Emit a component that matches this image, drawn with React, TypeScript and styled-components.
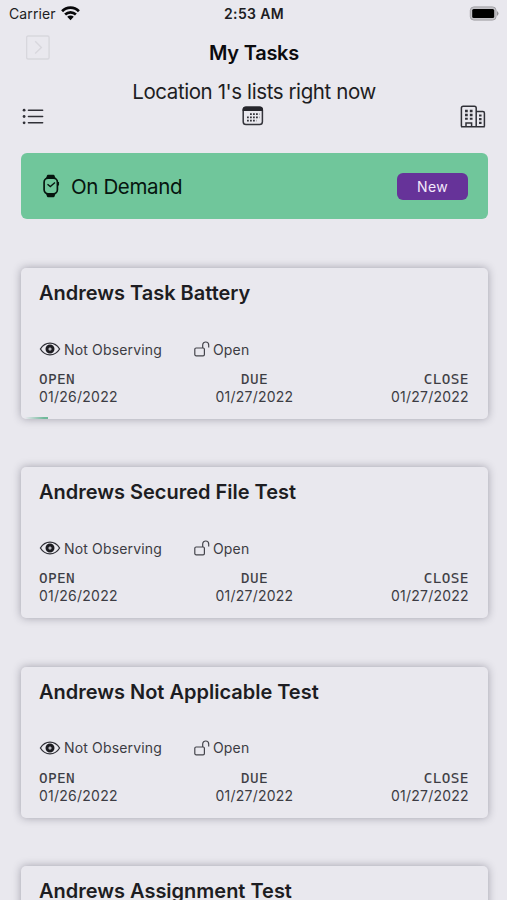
import React from "react";
import styled, { createGlobalStyle } from "styled-components";

const GlobalStyle = createGlobalStyle`
  * { box-sizing: border-box; }
  body { margin: 0; background: #e9e8ee; overflow: hidden; }
`;

const Screen = styled.main`
  width: 507px;
  height: 900px;
  overflow: hidden;
  background: #e9e8ee;
  color: #1d1d22;
  font-family: Inter, "Liberation Sans", sans-serif;
`;

const StatusBar = styled.div`
  height: 28px;
  padding: 0 8px 0 9px;
  display: grid;
  grid-template-columns: 1fr auto 1fr;
  align-items: center;
`;

const Carrier = styled.div`
  display: flex;
  align-items: center;
  gap: 5.5px;
  font-size: 14px;
  letter-spacing: 0.1px;
  line-height: 28px;

  svg { margin-top: -2px; }
`;

const Time = styled.div`
  margin-top: -1px;
  font-size: 14px;
  font-weight: 600;
  letter-spacing: 0.35px;
`;

const Battery = styled.svg`
  justify-self: end;
  margin-top: -2px;
`;

const NavBar = styled.header`
  height: 50px;
  padding: 7px 26px 0;
  display: grid;
  grid-template-columns: 24px 1fr 24px;
`;

const Title = styled.h1`
  margin: 6px 0 0;
  padding-left: 1px;
  text-align: center;
  font-size: 20px;
  line-height: 24px;
  font-weight: 600;
  letter-spacing: -0.25px;
  color: #0b0b0e;
`;

const Subtitle = styled.h2`
  margin: 0;
  height: 26px;
  padding-left: 1px;
  text-align: center;
  font-size: 20.5px;
  line-height: 27px;
  font-weight: 400;
  letter-spacing: -0.41px;
`;

const Toolbar = styled.nav`
  height: 24px;
  padding: 0 21px 0 22px;
  display: grid;
  grid-template-columns: 1fr 25px 1fr;
  align-items: center;

  svg:last-child { justify-self: end; }
`;

const Banner = styled.section`
  height: 66px;
  margin: 25px 19.5px 0 20.5px;
  padding: 0 19.5px 0 20px;
  display: flex;
  align-items: center;
  border-radius: 6px;
  background: #70c69b;
  color: #06150f;
`;

const BannerLabel = styled.span`
  flex: 1;
  margin-left: 10.5px;
  margin-top: 1px;
  font-size: 20.5px;
  letter-spacing: -0.37px;
`;

const NewButton = styled.button`
  width: 71px;
  height: 27px;
  padding: 0;
  border: 0;
  border-radius: 6px;
  background: #663399;
  color: #f3e8fb;
  font: 400 14px/27px Inter, sans-serif;
  letter-spacing: 0.4px;
`;

const CardList = styled.div`
  padding: 49px 19.5px 0 20.5px;
  display: grid;
  gap: 48.4px;
`;

const Card = styled.article`
  height: 151px;
  padding: 12px 18.6px 0 18.5px;
  display: flex;
  flex-direction: column;
  border-radius: 5px;
  overflow: hidden;
  background: #e9e8ee;
  box-shadow: 0 0 9px rgba(45, 42, 62, 0.38);
`;

const CardTitle = styled.h3`
  margin: 0;
  height: 57px;
  font-size: 20px;
  line-height: 27px;
  font-weight: 600;
  letter-spacing: -0.01px;
`;

const StatusRow = styled.div`
  height: 24px;
  display: flex;
  align-items: center;
  font-size: 14px;
  color: #3c3c43;
`;

const Status = styled.span<{ $width: number }>`
  width: ${({ $width }) => $width}px;
  display: flex;
  align-items: center;
  gap: 3px;
  letter-spacing: 0.16px;
  white-space: nowrap;
`;

const Dates = styled.div`
  margin-top: 10px;
  display: grid;
  grid-template-columns: 1fr 1fr 1fr;
  color: #3c3c43;
`;

const DateCell = styled.div<{ $align: string }>`
  text-align: ${({ $align }) => $align};
  font-size: 14px;
  line-height: 17px;
  letter-spacing: 0.24px;
  padding-left: ${({ $align }) => ($align === "center" ? "1px" : "0")};
`;

const DateLabel = styled.div`
  font-family: "DejaVu Sans Mono", monospace;
  font-size: 14.3px;
  line-height: 17px;
  letter-spacing: 0.4px;
  -webkit-text-stroke: 0.12px #3c3c43;
`;

const Progress = styled.div<{ $width: number }>`
  width: ${({ $width }) => $width}px;
  height: 2px;
  margin: auto 0 0 -18.5px;
  background: linear-gradient(90deg, rgba(112, 198, 155, 0) 15%, #70b99b 85%);
`;

const WifiIcon = () => (
  <svg width="19" height="15" viewBox="0 0 19 15" fill="none" stroke="#08080a" strokeWidth="2.7">
    <path d="M1.1 5.3C5.8.5 13.2.5 17.9 5.3" />
    <path d="M4.1 8.5c3.1-2.9 7.7-2.9 10.8 0" />
    <path d="m6.2 10.8 3.3 3.4 3.3-3.4c-1.8-1.6-4.8-1.6-6.6 0Z" fill="#08080a" stroke="none" />
  </svg>
);

const BatteryIcon = () => (
  <Battery width="30" height="15" viewBox="0 0 30 15">
    <rect x="1.3" y=".9" width="25.8" height="13.2" rx="3.6" fill="#c3c2c7" stroke="#a3a2a7" />
    <rect x="3.2" y="3" width="22" height="9" rx="1.5" fill="#000" />
    <path d="M28 5q3 2.5 0 5Z" fill="#929195" />
  </Battery>
);

const ForwardIcon = () => (
  <svg width="24" height="25" viewBox="0 0 24 25" fill="none" stroke="#d8d7dd" strokeWidth="1.4">
    <rect x=".6" y="1" width="22.5" height="23" rx="1.5" />
    <path d="m9.2 6.3 6.2 6.1-6.2 6.1" />
  </svg>
);

const ListIcon = () => (
  <svg width="22" height="17" viewBox="0 0 22 17" stroke="#303037" strokeWidth="1.6" strokeLinecap="round">
    <path d="M6.5 2.2H20.6M6.5 8.5H20.6M6.5 14.8H20.6" />
    <g fill="#303037" stroke="none">
      <circle cx="2.1" cy="2.2" r="1.4" />
      <circle cx="2.1" cy="8.5" r="1.4" />
      <circle cx="2.1" cy="14.8" r="1.4" />
    </g>
  </svg>
);

const CalendarIcon = () => (
  <svg width="22" height="20" viewBox="0 0 22 20">
    <rect x="1.2" y="1.2" width="19.2" height="17.4" rx="2.8" fill="none" stroke="#34343b" strokeWidth="1.5" />
    <path d="M.6 5V4Q.6.6 4 .6h13.6Q21 .6 21 4v1Z" fill="#25252b" />
    <path
      d="M8 8.2h9.3M5 11.4h12.3M5 14.6h9.3"
      stroke="#34343b"
      strokeWidth="1.8"
      strokeDasharray="1.8 1.2"
    />
  </svg>
);

const BuildingIcon = () => (
  <svg width="26" height="23" viewBox="0 0 26 23" fill="none" stroke="#303037" strokeWidth="1.5">
    <path d="M1.4 21.5V3q0-1.8 1.8-1.8h11.2q1.8 0 1.8 1.8v18.5M16.2 6.6h6.7q1.5 0 1.5 1.5v13.4M1 21.7h23.8" />
    <path d="M6 21.5v-3.6h5.6v3.6" />
    <path d="M6.4 4.7v10M11.2 4.7v10" strokeWidth="2.7" strokeDasharray="2.5 1.5" />
    <path d="M20.3 9.4v10" strokeWidth="2.5" strokeDasharray="2.2 1.5" />
  </svg>
);

const WatchIcon = () => (
  <svg width="20" height="24" viewBox="0 0 20 24" fill="none" stroke="#06150f" strokeWidth="1.7">
    <rect x="3.1" y="4.2" width="13.3" height="15.6" rx="4" />
    <path d="M4.8 5 6 1.4Q6.2.8 7 .8h5.5q.8 0 1 .6L14.7 5ZM4.8 19l1.2 3.6q.2.6 1 .6h5.5q.8 0 1-.6l1.2-3.6Z" fill="#06150f" stroke="none" />
    <path d="m6.5 10.2 2.8 2.4 4.7-4.2" strokeWidth="1.3" />
    <path d="M17.2 8v3.5" />
  </svg>
);

const EyeIcon = () => (
  <svg width="22" height="16" viewBox="0 0 22 16" fill="none" stroke="#303037">
    <path d="M1.4 8C6.2.2 15.8.2 20.6 8 15.8 15.8 6.2 15.8 1.4 8Z" strokeWidth="1.3" />
    <circle cx="11" cy="8" r="3" strokeWidth="3" stroke="#1c1c21" />
    <circle cx="11" cy="8" r="1" fill="#aaa9b0" stroke="none" />
  </svg>
);

const UnlockIcon = () => (
  <svg width="16" height="16" viewBox="0 0 16 16" fill="none" stroke="#44444b" strokeWidth="1.2">
    <rect x=".8" y="7" width="9.6" height="7.8" rx="1.3" />
    <path d="M8.7 7V4c0-4 6-4 6 0v2.5" />
  </svg>
);

const tasks = [
  { name: "Andrews Task Battery", progress: 27 },
  { name: "Andrews Secured File Test", progress: 0 },
  { name: "Andrews Not Applicable Test", progress: 0 },
  { name: "Andrews Assignment Test", progress: 0 },
];

const TaskCard = ({ name, progress }: { name: string; progress: number }) => (
  <Card>
    <CardTitle>{name}</CardTitle>
    <StatusRow>
      <Status $width={155}><EyeIcon />Not Observing</Status>
      <Status $width={70}><UnlockIcon />Open</Status>
    </StatusRow>
    <Dates>
      <DateCell $align="left"><DateLabel>OPEN</DateLabel>01/26/2022</DateCell>
      <DateCell $align="center"><DateLabel>DUE</DateLabel>01/27/2022</DateCell>
      <DateCell $align="right"><DateLabel>CLOSE</DateLabel>01/27/2022</DateCell>
    </Dates>
    {progress > 0 && <Progress $width={progress} />}
  </Card>
);

export default function App() {
  return (
    <>
      <GlobalStyle />
      <Screen>
        <StatusBar>
          <Carrier>Carrier<WifiIcon /></Carrier>
          <Time>2:53 AM</Time>
          <BatteryIcon />
        </StatusBar>
        <NavBar><ForwardIcon /><Title>My Tasks</Title></NavBar>
        <Subtitle>Location 1's lists right now</Subtitle>
        <Toolbar><ListIcon /><CalendarIcon /><BuildingIcon /></Toolbar>
        <Banner>
          <WatchIcon />
          <BannerLabel>On Demand</BannerLabel>
          <NewButton>New</NewButton>
        </Banner>
        <CardList>
          {tasks.map((task) => <TaskCard key={task.name} {...task} />)}
        </CardList>
      </Screen>
    </>
  );
}
